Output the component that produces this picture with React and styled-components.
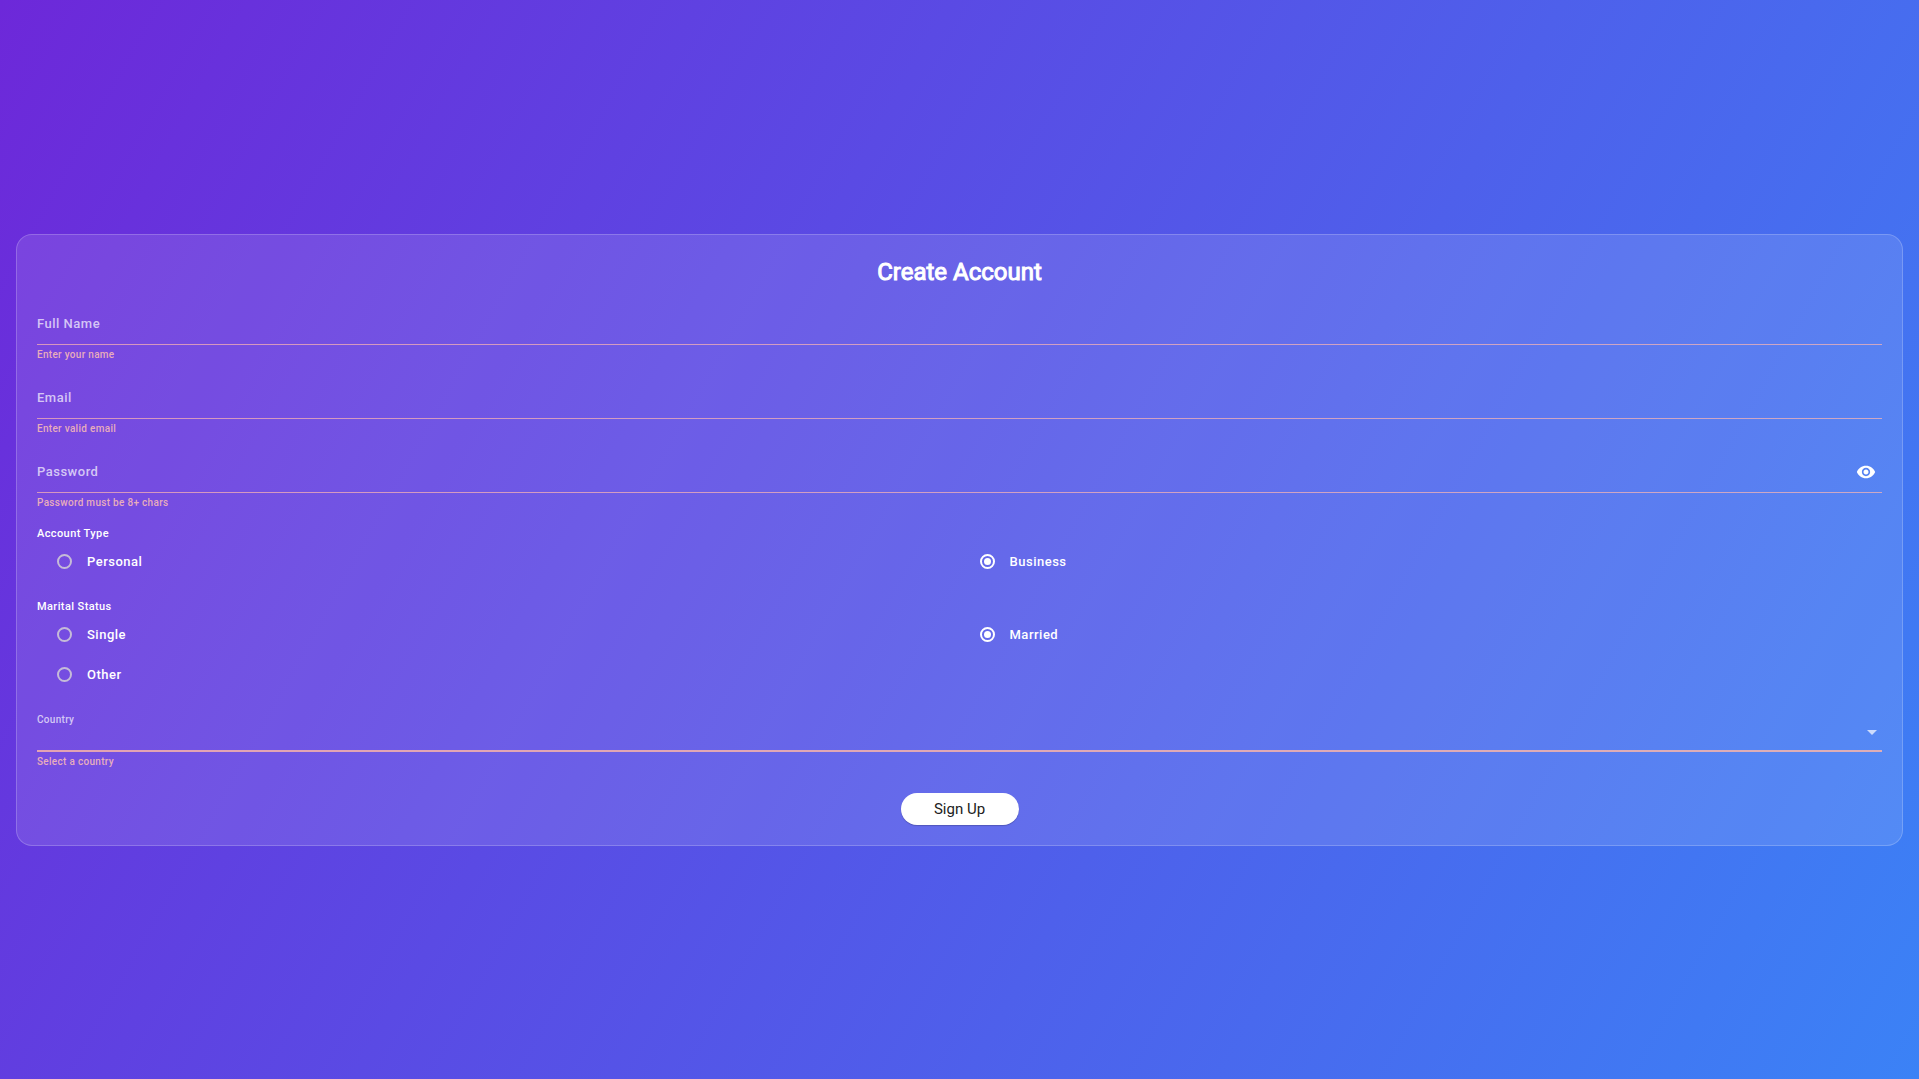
import React, { useId, useState } from "react";
import styled, { createGlobalStyle } from "styled-components";
import { MdVisibility, MdVisibilityOff } from "react-icons/md";

const GlobalStyle = createGlobalStyle`
  *, *::before, *::after { box-sizing: border-box; }
  body { margin: 0; font-family: Roboto, "Noto Sans", sans-serif; }
`;

const Page = styled.main`
  min-height: 100vh;
  padding: 16px;
  display: flex;
  flex-direction: column;
  justify-content: center;
  background: linear-gradient(119deg, #6d28d9, #3b82f6);
`;

const Card = styled.form`
  padding: 20px;
  display: flex;
  flex-direction: column;
  border: 1px solid rgba(255, 255, 255, 0.2);
  border-radius: 16px;
  background: rgba(255, 255, 255, 0.11);
  color: #fff;
`;

const Title = styled.h1`
  margin: 0 0 16px;
  font-size: 24px;
  line-height: 34px;
  font-weight: 400;
  -webkit-text-stroke: 1px #fff;
  text-align: center;
`;

const FieldBlock = styled.div`
  margin-bottom: ${(p) => p.$gap || 15}px;
`;

const Control = styled.div`
  display: grid;
  grid-template-columns: minmax(0, 1fr) auto;
  align-items: center;
  height: 40px;
  border-bottom: ${(p) => (p.$thick ? 2 : 1)}px solid
    ${(p) => (p.$thick ? "rgba(255, 184, 168, 0.8)" : "rgba(255, 184, 176, 0.7)")};
`;

const FieldLabel = styled.label`
  grid-area: 1 / 1;
  align-self: ${(p) => (p.$raised ? "start" : "center")};
  pointer-events: none;
  font-size: ${(p) => (p.$raised ? 10 : 13)}px;
  line-height: 16px;
  font-weight: 500;
  letter-spacing: ${(p) => (p.$raised ? 0.3 : 0.5)}px;
  color: rgba(255, 255, 255, 0.7);
`;

const TextInput = styled.input`
  grid-area: 1 / 1;
  width: 100%;
  height: 100%;
  padding: 0;
  border: 0;
  outline: 0;
  background: transparent;
  color: #fff;
  font: 500 13px Roboto, sans-serif;
`;

const Select = styled.select`
  grid-row: 1;
  grid-column: 1 / -1;
  width: 100%;
  height: 100%;
  padding: 16px 0 0;
  border: 0;
  outline: 0;
  appearance: none;
  background: transparent;
  color: #fff;
  font: 500 13px Roboto, sans-serif;
  option { color: #212121; }
`;

const IconButton = styled.button`
  grid-area: 1 / 2;
  display: flex;
  padding: 6px;
  border: 0;
  background: none;
  color: #fff;
  cursor: pointer;
`;

const Arrow = styled.svg`
  grid-area: 1 / 2;
  align-self: end;
  width: 10px;
  height: 5px;
  margin: 0 5px 15px 0;
  pointer-events: none;
  fill: rgba(255, 255, 255, 0.7);
`;

const ErrorText = styled.p`
  margin: 0;
  padding-top: 1px;
  font-size: 10px;
  line-height: 18px;
  font-weight: 500;
  letter-spacing: 0.3px;
  color: rgba(255, 192, 180, 0.85);
`;

const Group = styled.fieldset`
  margin: 0 0 17px;
  padding: 0;
  border: 0;
  min-width: 0;
`;

const Legend = styled.legend`
  padding: 0;
  font-size: 11px;
  line-height: 16px;
  font-weight: 500;
  letter-spacing: 0.4px;
`;

const Options = styled.div`
  display: grid;
  grid-template-columns: 1fr 1fr;
  grid-auto-rows: 40px;
`;

const Option = styled.label`
  display: flex;
  align-items: center;
  gap: 15px;
  padding-left: 20px;
  font-size: 13px;
  line-height: 16px;
  font-weight: 500;
  letter-spacing: 0.5px;
`;

const Radio = styled.input`
  flex: none;
  display: grid;
  place-items: center;
  width: 15px;
  height: 15px;
  margin: 0;
  appearance: none;
  border: 2px solid rgba(224, 224, 212, 0.75);
  border-radius: 50%;
  &:checked { border-color: #fff; }
  &:checked::before {
    content: "";
    width: 7px;
    height: 7px;
    border-radius: 50%;
    background: #fff;
  }
`;

const SubmitButton = styled.button`
  align-self: center;
  min-width: 118px;
  height: 32px;
  padding: 0 32px;
  border: 0;
  border-radius: 16px;
  background: #fff;
  box-shadow: 0 1px 1px rgba(0, 0, 0, 0.2);
  color: #212121;
  font: 400 15px Roboto, sans-serif;
  cursor: pointer;
`;

function TextField({ label, type = "text", error, gap, action }) {
  const id = useId();
  const [value, setValue] = useState("");
  return (
    <FieldBlock $gap={gap}>
      <Control>
        {!value && <FieldLabel htmlFor={id}>{label}</FieldLabel>}
        <TextInput
          id={id}
          type={type}
          aria-label={label}
          value={value}
          onChange={(e) => setValue(e.target.value)}
        />
        {action}
      </Control>
      <ErrorText>{error}</ErrorText>
    </FieldBlock>
  );
}

function RadioGroup({ legend, options, initial }) {
  const name = useId();
  return (
    <Group>
      <Legend>{legend}</Legend>
      <Options>
        {options.map((option) => (
          <Option key={option}>
            <Radio type="radio" name={name} value={option} defaultChecked={option === initial} />
            {option}
          </Option>
        ))}
      </Options>
    </Group>
  );
}

export default function App() {
  const [visible, setVisible] = useState(false);
  return (
    <>
      <GlobalStyle />
      <Page>
        <Card noValidate onSubmit={(e) => e.preventDefault()}>
          <Title>Create Account</Title>
          <TextField label="Full Name" error="Enter your name" />
          <TextField label="Email" type="email" error="Enter valid email" />
          <TextField
            label="Password"
            type={visible ? "text" : "password"}
            error="Password must be 8+ chars"
            gap={14}
            action={
              <IconButton
                type="button"
                aria-label={visible ? "Hide password" : "Show password"}
                onClick={() => setVisible(!visible)}
              >
                {visible ? <MdVisibilityOff size={20} /> : <MdVisibility size={20} />}
              </IconButton>
            }
          />
          <RadioGroup
            legend="Account Type"
            options={["Personal", "Business"]}
            initial="Business"
          />
          <RadioGroup
            legend="Marital Status"
            options={["Single", "Married", "Other"]}
            initial="Married"
          />
          <FieldBlock $gap={22}>
            <Control $thick>
              <FieldLabel htmlFor="country" $raised>Country</FieldLabel>
              <Select id="country" defaultValue="">
                <option value="" aria-label="No country selected" />
                <option>Canada</option>
                <option>India</option>
                <option>United States</option>
              </Select>
              <Arrow viewBox="0 0 10 5" aria-hidden="true">
                <path d="M0 0h10L5 5z" />
              </Arrow>
            </Control>
            <ErrorText>Select a country</ErrorText>
          </FieldBlock>
          <SubmitButton type="submit">Sign Up</SubmitButton>
        </Card>
      </Page>
    </>
  );
}
